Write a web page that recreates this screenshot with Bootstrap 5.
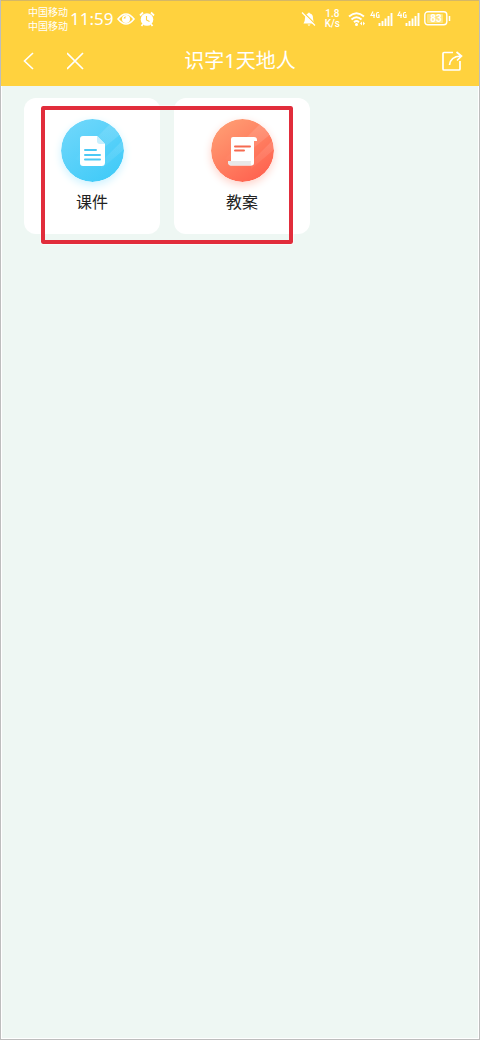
<!DOCTYPE html>
<html lang="zh-CN">
<head>
<meta charset="utf-8">
<meta name="viewport" content="width=device-width, initial-scale=1">
<title>识字1天地人</title>
<link href="https://cdn.jsdelivr.net/npm/bootstrap@5.3.0/dist/css/bootstrap.min.css" rel="stylesheet">
<style>
  body { font-family: "Noto Sans", "Noto Sans CJK SC", sans-serif; background: #eef7f3; color: #222; }
  .app { border: 1px solid #bdbdbd; box-shadow: inset 0 0 0 1px #fff; }
  .top { background: #ffd23e; color: #fff; margin-top: -1px; border-top: 1px solid #d5b765; }
  .status { height: 35px; padding: 0 28px 0 27px; }
  .carrier { font-size: 10px; line-height: 14px; margin-right: 2px; }
  .clock { font-family: "Noto Sans", sans-serif; font-size: 17px; line-height: 24px; }
  .speed { font-family: Roboto, sans-serif; font-size: 10px; line-height: 10px; font-weight: 500; }
  .titlebar { height: 50px; padding: 0 16px 0 18px; }
  .titlebar h1 { font-size: 20px; line-height: 28px; font-weight: 400; }
  .tool { width: 24px; height: 24px; color: #fff; }
  .tiles { gap: 14px; padding: 12px 23px; }
  .tile { width: 136px; height: 136px; border-radius: 12px; color: #222; padding-top: 21px; }
  .tile span { font-size: 16px; line-height: 24px; margin-top: 8px; }
  .disc { border-radius: 50%; }
  .disc-blue { box-shadow: 0 3px 8px #cdf2ff; }
  .disc-red { box-shadow: 0 3px 8px #ffd3ca; }
  .marker { left: 40px; top: 20px; width: 252px; height: 138px; border: 4px solid #e12d3b; border-radius: 2px; outline: 1px solid #fff8; pointer-events: none; }
</style>
</head>
<body>
<div class="app min-vh-100">
  <header class="top">
    <div class="status d-flex align-items-center justify-content-between">
      <div class="d-flex align-items-center">
        <div class="carrier">中国移动<br>中国移动</div>
        <div class="clock me-1">11:59</div>
        <svg class="me-1" width="18" height="14" viewBox="0 0 18 14" aria-hidden="true"><path d="M1 7Q9-3 17 7Q9 17 1 7Z" fill="none" stroke="#fff" stroke-width="1.6"/><circle cx="9" cy="7" r="4" fill="#fff"/><path d="M6.500 6.500Q7 4 9.500 4.500Q8 5 8.500 6.500Z" fill="#ffd23e"/></svg>
        <svg width="16" height="16" viewBox="0 0 16 16" aria-hidden="true"><circle cx="8" cy="8.500" r="6.300" fill="#fff"/><path d="M1 4.500 4 1.500M15 4.500 12 1.500M4 13 2.500 15M12 13l1.500 2" stroke="#fff" stroke-width="1.800"/><path d="M7.500 5v4l3 1.500" fill="none" stroke="#ffd23e" stroke-width="1.100"/></svg>
      </div>
      <div class="d-flex align-items-center">
        <svg class="me-2" width="16" height="16" viewBox="0 0 16 16" aria-hidden="true"><path d="M2.500 12.500Q4 10 4 7Q4.500 3 7 2.500Q8 .5 9 2.500Q12 3 12 7Q12 10 13.500 12.500Z M6.500 13.500h3l-1.500 1.500Z" fill="#fff"/><path d="m2 1 13 13" stroke="#ffd23e" stroke-width="1.500"/><path d="m1 1.500 13 13" stroke="#fff" stroke-width="1.300"/></svg>
        <div class="speed text-center me-2">1.8<br>K/s</div>
        <svg class="me-1" width="18" height="16" viewBox="0 0 18 16" aria-hidden="true"><path d="M1 5.500Q8.500-1 16 5.500M3.500 8.500Q8.500 4 13.500 8.500M6 11.200Q8.500 9 11 11.200" fill="none" stroke="#fff" stroke-width="1.900"/><circle cx="8.500" cy="13.500" r="1.500" fill="#fff"/><path d="m14 10.500-2 2 2 2ZM15 10.500l2 2-2 2Z" fill="#fff"/></svg>
        <svg class="me-1" width="23" height="16" viewBox="0 0 23 16" role="img" aria-label="4G"><path d="M3 .5 1 4.500h4M4 2.500V7M9 1.500H7.500Q6.500 1.500 6.500 4T7.500 6.500H9V4H8" fill="none" stroke="#fff" stroke-width="1.200"/><path d="M9.500 15v-3M12.500 15v-5M15.500 15V7.500M18.500 15V5M21.500 15V2" stroke="#fff" stroke-width="1.900"/></svg>
        <svg class="me-1" width="23" height="16" viewBox="0 0 23 16" role="img" aria-label="4G"><path d="M3 .5 1 4.500h4M4 2.500V7M9 1.500H7.500Q6.500 1.500 6.500 4T7.500 6.500H9V4H8" fill="none" stroke="#fff" stroke-width="1.200"/><path d="M9.500 15v-3M12.500 15v-5M15.500 15V7.500M18.500 15V5M21.500 15V2" stroke="#fff" stroke-width="1.900"/></svg>
        <svg width="27" height="15" viewBox="0 0 27 15" role="img" aria-label="83"><rect x=".8" y=".8" width="22" height="13" rx="3" fill="none" stroke="#fff" stroke-width="1.400"/><rect x="3" y="3" width="16" height="9" rx="1" fill="#ffe480"/><path d="M25.500 5v5" stroke="#fff" stroke-width="1.500"/><text x="12" y="11" text-anchor="middle" font-family="Roboto, sans-serif" font-size="10" font-weight="700" fill="#fff">83</text></svg>
      </div>
    </div>
    <nav class="titlebar position-relative d-flex align-items-center justify-content-between">
      <div class="d-flex gap-4">
        <button type="button" class="tool btn p-0 border-0 d-flex" aria-label="返回"><svg width="24" height="24" viewBox="0 0 24 24"><path d="m14 4-8.500 8 8.500 8" fill="none" stroke="#fff" stroke-width="1.600"/></svg></button>
        <button type="button" class="tool btn p-0 border-0 d-flex" aria-label="关闭"><svg width="24" height="24" viewBox="0 0 24 24"><path d="m0 4 16 16M16 4 0 20" fill="none" stroke="#fff" stroke-width="1.700"/></svg></button>
      </div>
      <h1 class="position-absolute start-50 translate-middle-x m-0 text-nowrap">识字1天地人</h1>
      <button type="button" class="tool btn p-0 border-0 d-flex" aria-label="分享"><svg width="24" height="24" viewBox="0 0 24 24"><path d="M14 3.500H5Q4 3.500 4 4.500V20Q4 21 5 21H20Q21 21 21 20V12" fill="none" stroke="#fff" stroke-width="1.700"/><path d="M10.500 16Q11.500 7.500 21.500 7M17.500 3l5 4-4.500 4.500" fill="none" stroke="#fff" stroke-width="1.700"/></svg></button>
    </nav>
  </header>
  <main class="tiles position-relative d-flex flex-wrap">
    <a href="#" class="tile bg-white text-decoration-none d-flex flex-column align-items-center">
      <svg class="disc disc-blue" width="63" height="63" viewBox="0 0 63 63" aria-hidden="true">
        <defs><linearGradient id="blue" x1="0" y1="0" x2=".7" y2="1"><stop stop-color="#73d8fb"/><stop offset="1" stop-color="#42cbf8"/></linearGradient><linearGradient id="sheen" x1="1" y1="0" x2="0" y2="1"><stop stop-color="#fff" stop-opacity=".16"/><stop offset="1" stop-color="#fff" stop-opacity="0"/></linearGradient><clipPath id="round"><circle cx="31.500" cy="31.500" r="31.500"/></clipPath></defs>
        <circle cx="31.500" cy="31.500" r="31.500" fill="url(#blue)"/>
        <path clip-path="url(#round)" d="M50 4 14 40 24 44 61 14ZM63 20 40 43v7L66 28Z" fill="url(#sheen)"/>
        <path d="M22 17H36L44 25V43.500Q44 47 40.500 47H22Q19 47 19 44V20Q19 17 22 17Z" fill="#fff"/><path d="M36 17v5q0 3 3 3h5Z" fill="#c8effd"/>
        <path d="M24 31h11M24 36h15M24 40.500h15" stroke="#4cc9f5" stroke-width="2" stroke-linecap="round"/>
      </svg>
      <span>课件</span>
    </a>
    <a href="#" class="tile bg-white text-decoration-none d-flex flex-column align-items-center">
      <svg class="disc disc-red" width="63" height="63" viewBox="0 0 63 63" aria-hidden="true">
        <defs><linearGradient id="red" x1="0" y1="0" x2=".7" y2="1"><stop stop-color="#ffa477"/><stop offset="1" stop-color="#ff6350"/></linearGradient></defs>
        <circle cx="31.500" cy="31.500" r="31.500" fill="url(#red)"/>
        <path clip-path="url(#round)" d="M50 4 14 40 24 44 61 14ZM63 20 40 43v7L66 28Z" fill="url(#sheen)"/>
        <path d="M22 18H43Q46 18 46 21V22H43V44Q43 46.500 40 46.500H20Q17 46.500 17 42H20V20Q20 18 22 18Z" fill="#fff"/><path d="M17 42H40Q39 46.500 42 46.500H20Q17 46.500 17 42Z" fill="#e8e8e8"/>
        <path d="M24 27.500h15M24 31.500h9" stroke="#f66a50" stroke-width="2" stroke-linecap="round"/>
      </svg>
      <span>教案</span>
    </a>
    <div class="marker position-absolute"></div>
  </main>
</div>
<script src="https://cdn.jsdelivr.net/npm/bootstrap@5.3.0/dist/js/bootstrap.bundle.min.js"></script>
</body>
</html>
